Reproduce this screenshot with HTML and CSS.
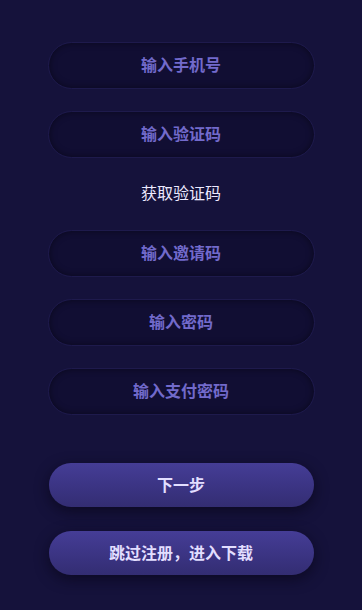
FILE: index.html
```html
<!DOCTYPE html>
<html>
<head>
<meta charset="utf-8">
<link rel="stylesheet" href="styles.css">
</head>
<body>
<div class="form">
  <div class="field">输入手机号</div>
  <div class="field">输入验证码</div>
  <div class="code-link">获取验证码</div>
  <div class="field">输入邀请码</div>
  <div class="field">输入密码</div>
  <div class="field">输入支付密码</div>
  <div class="actions">
    <div class="btn">下一步</div>
    <div class="btn">跳过注册，进入下载</div>
  </div>
</div>
</body>
</html>
```
FILE: styles.css
```css
html, body {
  margin: 0;
  padding: 0;
  background: #15123b;
  height: 100%;
}
body {
  font-family: "Noto Sans CJK SC", "Noto Sans", sans-serif;
}
.form {
  width: 267px;
  margin: 0 auto;
  padding-top: 42px;
  display: flex;
  flex-direction: column;
  align-items: center;
}
.field {
  box-sizing: border-box;
  width: 267px;
  height: 47px;
  margin-bottom: 22px;
  padding-bottom: 3px;
  border-radius: 24px;
  background: #110e33;
  border: 1px solid #1e1a4c;
  box-shadow: inset 0 0 7px rgba(0,0,0,0.45);
  color: #726acb;
  font-size: 16px;
  font-weight: 700;
  display: flex;
  align-items: center;
  justify-content: center;
}
.code-link {
  color: #ece9ff;
  font-size: 16px;
  line-height: 22px;
  margin-top: 1px;
  margin-bottom: 27px;
}
.actions {
  margin-top: 26px;
  display: flex;
  flex-direction: column;
  gap: 24px;
}
.btn {
  box-sizing: border-box;
  width: 265px;
  height: 44px;
  padding-bottom: 2px;
  border-radius: 22px;
  background: linear-gradient(180deg, #453d96 0%, #3a3381 60%, #332d72 100%);
  box-shadow: 0 4px 14px rgba(8, 6, 24, 0.7);
  color: #e2deff;
  font-size: 16px;
  font-weight: 700;
  display: flex;
  align-items: center;
  justify-content: center;
}
```
